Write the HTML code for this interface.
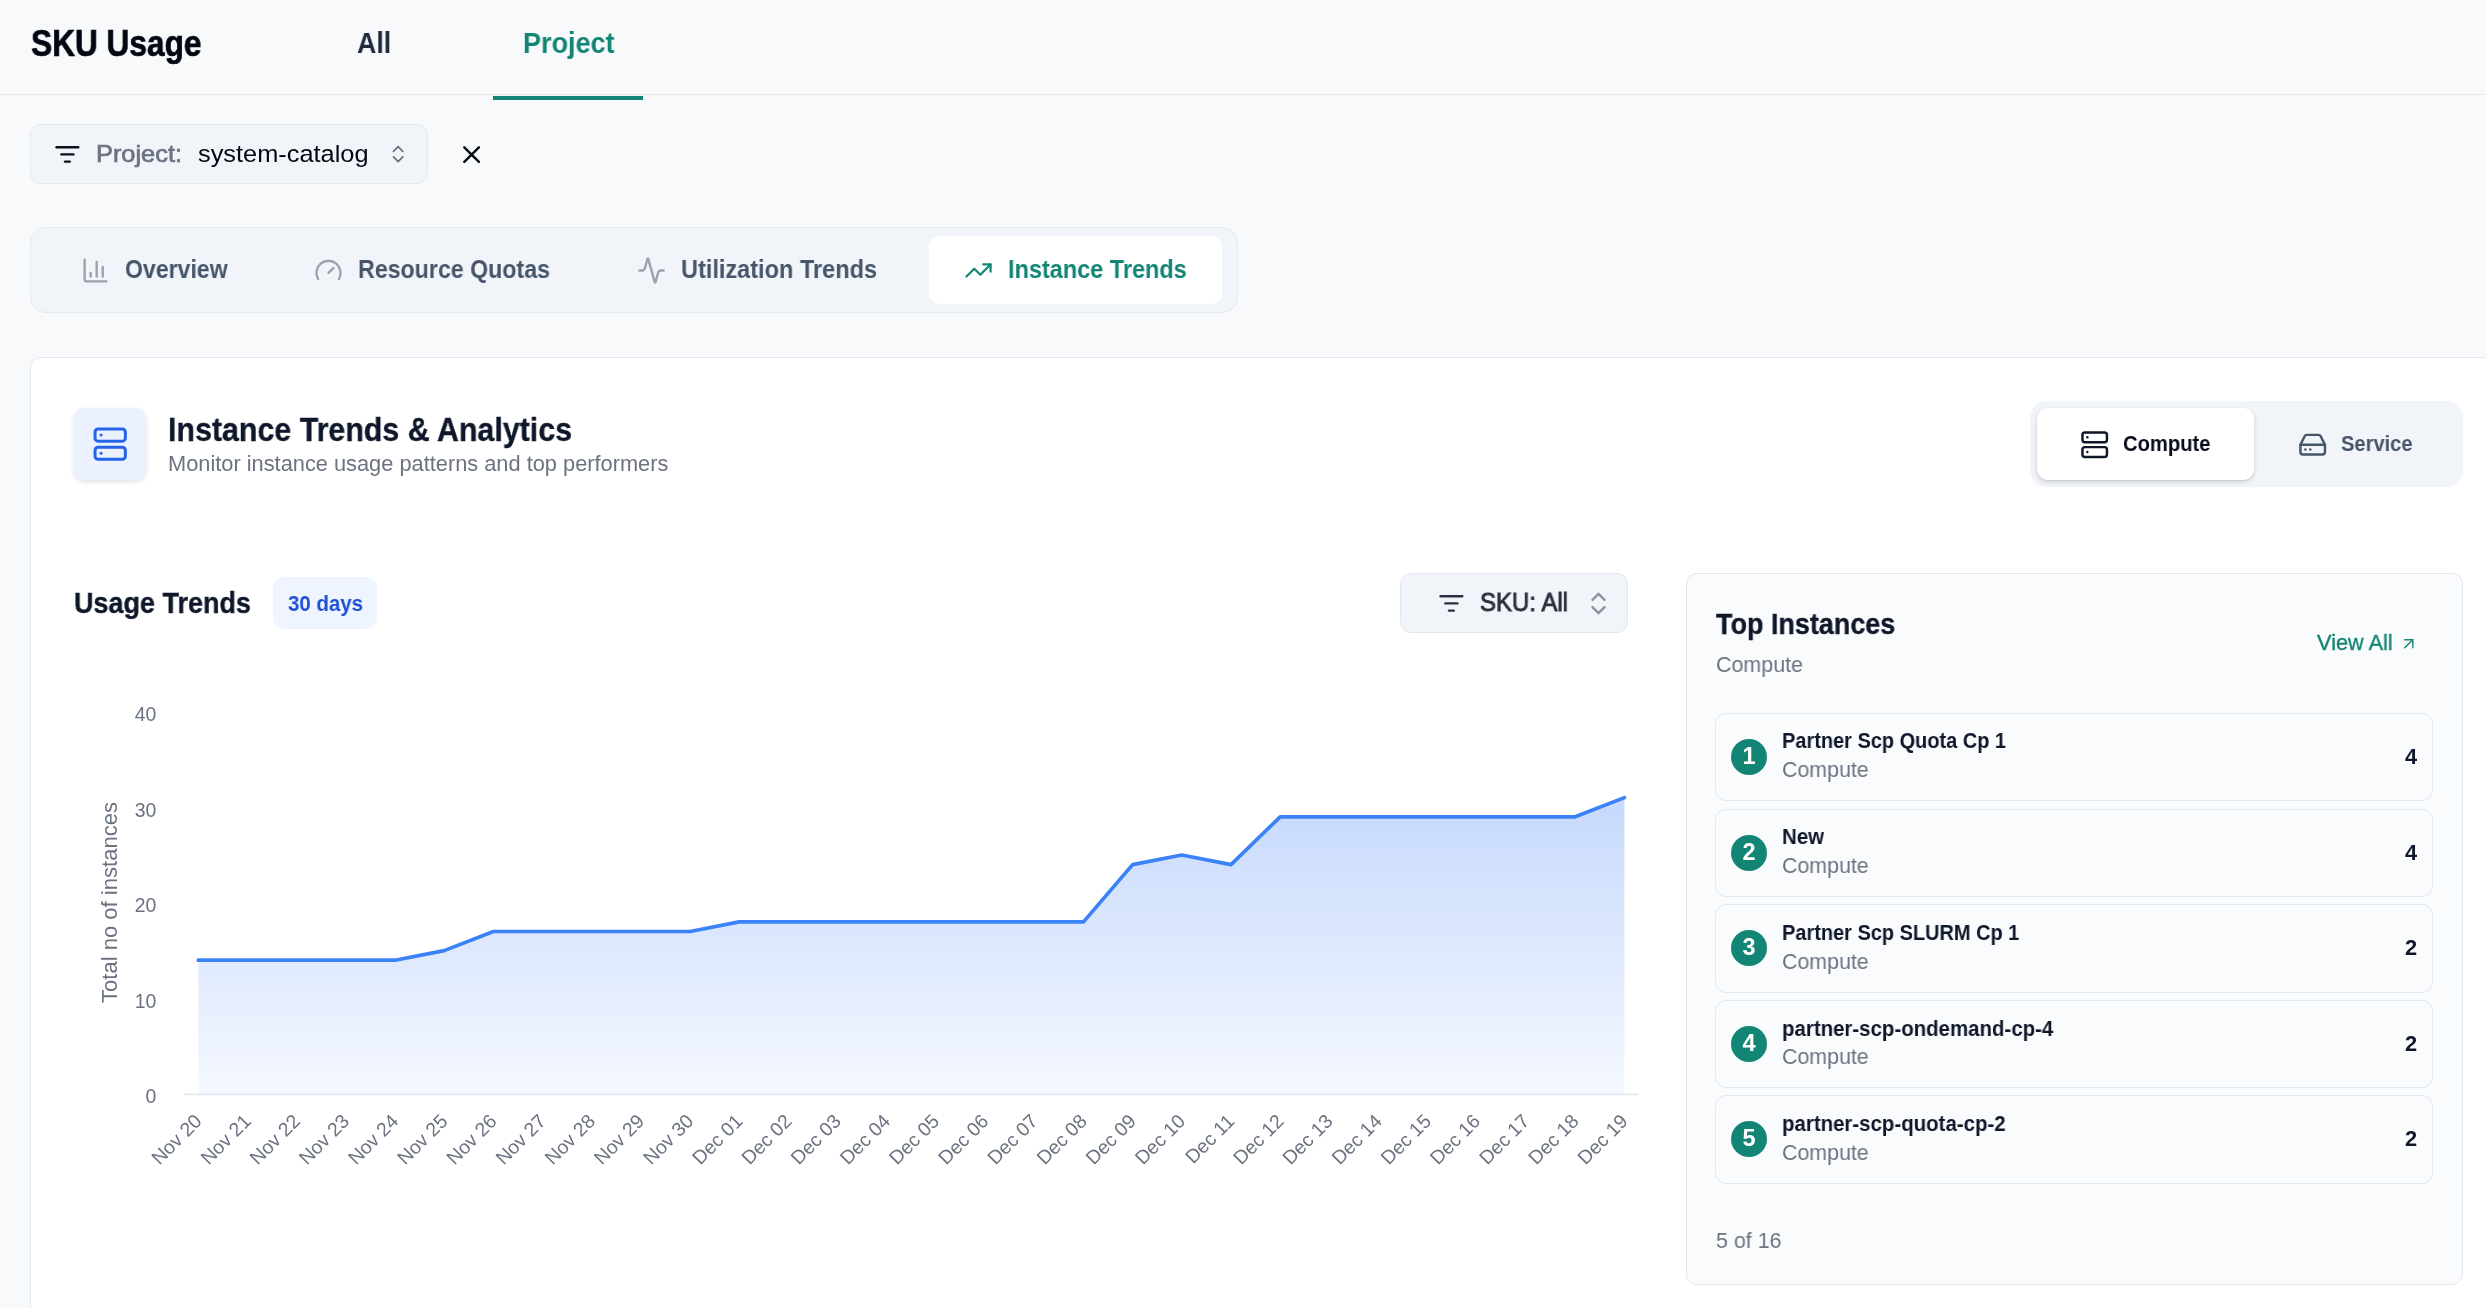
<!DOCTYPE html>
<html><head><meta charset="utf-8"><title>SKU Usage</title>
<style>
html,body{margin:0;padding:0}
body{width:2486px;height:1308px;overflow:hidden;position:relative;background:#f8f9fb;font-family:"Liberation Sans", sans-serif;}
.t{position:absolute;line-height:1;white-space:nowrap;transform-origin:0 0;will-change:transform;}
.box{position:absolute;box-sizing:border-box;}
.item{position:absolute;box-sizing:border-box;left:1715px;width:718px;height:87.7px;border:1.35px solid #e2e8f0;border-radius:11px;background:#fafbfd}
.circ{position:absolute;left:1731px;width:36px;height:36px;border-radius:50%;background:#128574;color:#fff;font-weight:bold;font-size:23.5px;line-height:35px;text-align:center;will-change:transform}
</style></head><body>
<div class="box" style="left:0;top:94px;width:2486px;height:1.3px;background:#e7e8eb"></div>
<div class="box" style="left:493px;top:96px;width:150px;height:4px;background:#128574"></div>
<div class="box" style="left:30px;top:124px;width:398px;height:60px;border:1.35px solid #e2e8f0;border-radius:10.7px;background:#f1f4f9"></div>
<div class="box" style="left:30px;top:227px;width:1208px;height:86px;border:1.35px solid #e4e9f1;border-radius:16px;background:#f1f4f9"></div>
<div class="box" style="left:929px;top:236px;width:293px;height:68px;border-radius:10.7px;background:#fff"></div>
<div class="box" style="left:30px;top:357px;width:2600px;height:1100px;border:1.35px solid #e2e8f0;border-radius:11px;background:#fff"></div>
<div class="box" style="left:74px;top:408px;width:72px;height:72px;border-radius:10.7px;background:#ebf1fe;box-shadow:0 2px 5px rgba(0,0,0,.12)"></div>
<div class="box" style="left:2030px;top:401px;width:433px;height:86px;border-radius:16px;background:#f1f4f9"></div>
<div class="box" style="left:2037px;top:408px;width:216.8px;height:72px;border-radius:11px;background:#fff;box-shadow:0 2px 5px rgba(0,0,0,.13),0 1px 2px rgba(0,0,0,.08)"></div>
<div class="box" style="left:273px;top:577px;width:104px;height:52px;border-radius:11px;background:#eff5ff"></div>
<div class="box" style="left:1400px;top:573px;width:228px;height:60px;border:1.35px solid #e2e8f0;border-radius:10.7px;background:#f1f4f9"></div>
<div class="box" style="left:1686px;top:573px;width:777px;height:712px;border:1.35px solid #e2e8f0;border-radius:11px;background:#fafbfd"></div>
<div class="item" style="top:713px;height:88px"></div><div class="circ" style="top:739px">1</div>
<div class="item" style="top:809px;height:88px"></div><div class="circ" style="top:835px">2</div>
<div class="item" style="top:904px;height:89px"></div><div class="circ" style="top:930px">3</div>
<div class="item" style="top:1000px;height:88px"></div><div class="circ" style="top:1026px">4</div>
<div class="item" style="top:1095px;height:89px"></div><div class="circ" style="top:1121px">5</div>

<svg id="chart" width="2486" height="1308" viewBox="0 0 2486 1308" style="position:absolute;left:0;top:0">
<defs><linearGradient id="ag" x1="0" y1="798" x2="0" y2="1094" gradientUnits="userSpaceOnUse"><stop offset="0" stop-color="#c6d9fc"/><stop offset="1" stop-color="#f5f8ff"/></linearGradient></defs>
<polygon points="198.3,1094 198.3,960.2 247.5,960.2 296.7,960.2 345.8,960.2 395.0,960.2 444.2,950.6 493.4,931.5 542.5,931.5 591.7,931.5 640.9,931.5 690.1,931.5 739.2,921.9 788.4,921.9 837.6,921.9 886.8,921.9 935.9,921.9 985.1,921.9 1034.3,921.9 1083.5,921.9 1132.6,864.6 1181.8,855.0 1231.0,864.6 1280.2,816.8 1329.3,816.8 1378.5,816.8 1427.7,816.8 1476.9,816.8 1526.0,816.8 1575.2,816.8 1624.4,797.6 1624.4,1094" fill="url(#ag)"/>
<rect x="184" y="1093.7" width="1454" height="1.5" fill="#e2e4e9"/>
<polyline points="198.3,960.2 247.5,960.2 296.7,960.2 345.8,960.2 395.0,960.2 444.2,950.6 493.4,931.5 542.5,931.5 591.7,931.5 640.9,931.5 690.1,931.5 739.2,921.9 788.4,921.9 837.6,921.9 886.8,921.9 935.9,921.9 985.1,921.9 1034.3,921.9 1083.5,921.9 1132.6,864.6 1181.8,855.0 1231.0,864.6 1280.2,816.8 1329.3,816.8 1378.5,816.8 1427.7,816.8 1476.9,816.8 1526.0,816.8 1575.2,816.8 1624.4,797.6" fill="none" stroke="#3b82f6" stroke-width="3.7" stroke-linejoin="round" stroke-linecap="round"/>
<g font-family='"Liberation Sans", sans-serif' font-size="19.4" fill="#6b7280" letter-spacing="0">
<text x="156.4" y="1102.9" text-anchor="end">0</text>
<text x="156.4" y="1007.5" text-anchor="end">10</text>
<text x="156.4" y="912.1" text-anchor="end">20</text>
<text x="156.4" y="816.7" text-anchor="end">30</text>
<text x="156.4" y="721.3" text-anchor="end">40</text>
<text x="202.9" y="1122.4" text-anchor="end" transform="rotate(-45 202.9 1122.4)">Nov 20</text>
<text x="252.1" y="1122.4" text-anchor="end" transform="rotate(-45 252.1 1122.4)">Nov 21</text>
<text x="301.3" y="1122.4" text-anchor="end" transform="rotate(-45 301.3 1122.4)">Nov 22</text>
<text x="350.4" y="1122.4" text-anchor="end" transform="rotate(-45 350.4 1122.4)">Nov 23</text>
<text x="399.6" y="1122.4" text-anchor="end" transform="rotate(-45 399.6 1122.4)">Nov 24</text>
<text x="448.8" y="1122.4" text-anchor="end" transform="rotate(-45 448.8 1122.4)">Nov 25</text>
<text x="498.0" y="1122.4" text-anchor="end" transform="rotate(-45 498.0 1122.4)">Nov 26</text>
<text x="547.1" y="1122.4" text-anchor="end" transform="rotate(-45 547.1 1122.4)">Nov 27</text>
<text x="596.3" y="1122.4" text-anchor="end" transform="rotate(-45 596.3 1122.4)">Nov 28</text>
<text x="645.5" y="1122.4" text-anchor="end" transform="rotate(-45 645.5 1122.4)">Nov 29</text>
<text x="694.7" y="1122.4" text-anchor="end" transform="rotate(-45 694.7 1122.4)">Nov 30</text>
<text x="743.8" y="1122.4" text-anchor="end" transform="rotate(-45 743.8 1122.4)">Dec 01</text>
<text x="793.0" y="1122.4" text-anchor="end" transform="rotate(-45 793.0 1122.4)">Dec 02</text>
<text x="842.2" y="1122.4" text-anchor="end" transform="rotate(-45 842.2 1122.4)">Dec 03</text>
<text x="891.4" y="1122.4" text-anchor="end" transform="rotate(-45 891.4 1122.4)">Dec 04</text>
<text x="940.5" y="1122.4" text-anchor="end" transform="rotate(-45 940.5 1122.4)">Dec 05</text>
<text x="989.7" y="1122.4" text-anchor="end" transform="rotate(-45 989.7 1122.4)">Dec 06</text>
<text x="1038.9" y="1122.4" text-anchor="end" transform="rotate(-45 1038.9 1122.4)">Dec 07</text>
<text x="1088.1" y="1122.4" text-anchor="end" transform="rotate(-45 1088.1 1122.4)">Dec 08</text>
<text x="1137.2" y="1122.4" text-anchor="end" transform="rotate(-45 1137.2 1122.4)">Dec 09</text>
<text x="1186.4" y="1122.4" text-anchor="end" transform="rotate(-45 1186.4 1122.4)">Dec 10</text>
<text x="1235.6" y="1122.4" text-anchor="end" transform="rotate(-45 1235.6 1122.4)">Dec 11</text>
<text x="1284.8" y="1122.4" text-anchor="end" transform="rotate(-45 1284.8 1122.4)">Dec 12</text>
<text x="1333.9" y="1122.4" text-anchor="end" transform="rotate(-45 1333.9 1122.4)">Dec 13</text>
<text x="1383.1" y="1122.4" text-anchor="end" transform="rotate(-45 1383.1 1122.4)">Dec 14</text>
<text x="1432.3" y="1122.4" text-anchor="end" transform="rotate(-45 1432.3 1122.4)">Dec 15</text>
<text x="1481.5" y="1122.4" text-anchor="end" transform="rotate(-45 1481.5 1122.4)">Dec 16</text>
<text x="1530.6" y="1122.4" text-anchor="end" transform="rotate(-45 1530.6 1122.4)">Dec 17</text>
<text x="1579.8" y="1122.4" text-anchor="end" transform="rotate(-45 1579.8 1122.4)">Dec 18</text>
<text x="1629.0" y="1122.4" text-anchor="end" transform="rotate(-45 1629.0 1122.4)">Dec 19</text>
</g>
<text x="117" y="902.5" text-anchor="middle" transform="rotate(-90 117 902.5)" font-family='"Liberation Sans", sans-serif' font-size="21.6" textLength="201" lengthAdjust="spacingAndGlyphs" fill="#6b7280">Total no of instances</text>
</svg>
<svg style="position:absolute;left:53px;top:139.6px" width="28.8" height="28.8" viewBox="0 0 24 24" fill="none" stroke="#0b0f1a" stroke-width="2" stroke-linecap="round" stroke-linejoin="round" ><path d="M3 6h18"/><path d="M7 12h10"/><path d="M10 18h4"/></svg>
<svg style="position:absolute;left:387.0px;top:143.0px" width="22.3" height="22.3" viewBox="0 0 24 24" fill="none" stroke="#6b7280" stroke-width="1.9" stroke-linecap="round" stroke-linejoin="round" ><path d="m7 15 5 5 5-5"/><path d="m7 9 5-5 5 5"/></svg>
<svg style="position:absolute;left:456.5px;top:139.7px" width="29.2" height="29.2" viewBox="0 0 24 24" fill="none" stroke="#070b16" stroke-width="2" stroke-linecap="round" stroke-linejoin="round" ><path d="M18 6 6 18"/><path d="m6 6 12 12"/></svg>
<svg style="position:absolute;left:80.6px;top:256.1px" width="29" height="29" viewBox="0 0 24 24" fill="none" stroke="#9ca3af" stroke-width="2" stroke-linecap="round" stroke-linejoin="round" ><path d="M3 3v16a2 2 0 0 0 2 2h16"/><path d="M18 17V9"/><path d="M13 17V5"/><path d="M8 17v-3"/></svg>
<svg style="position:absolute;left:313.5px;top:255.6px" width="29" height="29" viewBox="0 0 24 24" fill="none" stroke="#9ca3af" stroke-width="2" stroke-linecap="round" stroke-linejoin="round" ><path d="m12 14 4-4"/><path d="M3.34 19a10 10 0 1 1 17.32 0"/></svg>
<svg style="position:absolute;left:636.5px;top:255.8px" width="29" height="29" viewBox="0 0 24 24" fill="none" stroke="#9ca3af" stroke-width="2" stroke-linecap="round" stroke-linejoin="round" ><path d="M22 12h-2.48a2 2 0 0 0-1.93 1.46l-2.35 8.36a.25.25 0 0 1-.48 0L9.24 2.18a.25.25 0 0 0-.48 0l-2.35 8.36A2 2 0 0 1 4.49 12H2"/></svg>
<svg style="position:absolute;left:964px;top:255.8px" width="29" height="29" viewBox="0 0 24 24" fill="none" stroke="#128574" stroke-width="1.8" stroke-linecap="round" stroke-linejoin="round" ><path d="M16 7h6v6"/><path d="m22 7-8.5 8.5-5-5L2 17"/></svg>
<svg style="position:absolute;left:92px;top:425.8px" width="36.4" height="36.4" viewBox="0 0 24 24" fill="none" stroke="#2563eb" stroke-width="2" stroke-linecap="round" stroke-linejoin="round" ><rect width="20" height="8" x="2" y="2" rx="2" ry="2"/><rect width="20" height="8" x="2" y="14" rx="2" ry="2"/><line x1="6" x2="6.01" y1="6" y2="6"/><line x1="6" x2="6.01" y1="18" y2="18"/></svg>
<svg style="position:absolute;left:2079.6px;top:429.9px" width="29.4" height="29.4" viewBox="0 0 24 24" fill="none" stroke="#0f172a" stroke-width="2" stroke-linecap="round" stroke-linejoin="round" ><rect width="20" height="8" x="2" y="2" rx="2" ry="2"/><rect width="20" height="8" x="2" y="14" rx="2" ry="2"/><line x1="6" x2="6.01" y1="6" y2="6"/><line x1="6" x2="6.01" y1="18" y2="18"/></svg>
<svg style="position:absolute;left:2298px;top:429.6px" width="29.4" height="29.4" viewBox="0 0 24 24" fill="none" stroke="#475569" stroke-width="2" stroke-linecap="round" stroke-linejoin="round" ><line x1="22" x2="2" y1="12" y2="12"/><path d="M5.45 5.11 2 12v6a2 2 0 0 0 2 2h16a2 2 0 0 0 2-2v-6l-3.45-6.89A2 2 0 0 0 16.76 4H7.24a2 2 0 0 0-1.79 1.11z"/><line x1="6" x2="6.01" y1="16" y2="16"/><line x1="10" x2="10.01" y1="16" y2="16"/></svg>
<svg style="position:absolute;left:1437px;top:589px" width="28.8" height="28.8" viewBox="0 0 24 24" fill="none" stroke="#2b313e" stroke-width="2" stroke-linecap="round" stroke-linejoin="round" ><path d="M3 6h18"/><path d="M7 12h10"/><path d="M10 18h4"/></svg>
<svg style="position:absolute;left:1584.2px;top:589px" width="29" height="29" viewBox="0 0 24 24" fill="none" stroke="#8d94a1" stroke-width="2" stroke-linecap="round" stroke-linejoin="round" ><path d="m7 15 5 5 5-5"/><path d="m7 9 5-5 5 5"/></svg>
<svg style="position:absolute;left:2399.4px;top:633.9px" width="19.5" height="19.5" viewBox="0 0 24 24" fill="none" stroke="#128574" stroke-width="1.7" stroke-linecap="round" stroke-linejoin="round" ><path d="M7 7h10v10"/><path d="M7 17 17 7"/></svg>
<div class="t" id="t_sku" style="font-size:37.3px;font-weight:bold;color:#030712;top:25px;left:30.60px;transform:scaleX(0.8480);-webkit-text-stroke:0.7px #030712;">SKU Usage</div>
<div class="t" id="t_all" style="font-size:29.3px;font-weight:bold;color:#1e293b;top:28px;left:357.10px;transform:scaleX(0.9135);">All</div>
<div class="t" id="t_proj" style="font-size:29.3px;font-weight:bold;color:#128574;top:28px;left:522.60px;transform:scaleX(0.9222);">Project</div>
<div class="t" id="t_projl" style="font-size:24.5px;font-weight:normal;color:#6b7280;top:142px;left:96.00px;transform:scaleX(1.0354);-webkit-text-stroke:0.7px #6b7280;">Project:</div>
<div class="t" id="t_syscat" style="font-size:24.5px;font-weight:normal;color:#030712;top:142px;left:198.00px;transform:scaleX(1.0348);">system-catalog</div>
<div class="t" id="t_ov" style="font-size:25.8px;font-weight:bold;color:#475569;top:257px;left:125.30px;transform:scaleX(0.8942);">Overview</div>
<div class="t" id="t_rq" style="font-size:25.8px;font-weight:bold;color:#475569;top:257px;left:358.30px;transform:scaleX(0.8988);">Resource Quotas</div>
<div class="t" id="t_ut" style="font-size:25.8px;font-weight:bold;color:#475569;top:257px;left:680.50px;transform:scaleX(0.9116);">Utilization Trends</div>
<div class="t" id="t_it" style="font-size:25.8px;font-weight:bold;color:#128574;top:257px;left:1007.50px;transform:scaleX(0.9103);">Instance Trends</div>
<div class="t" id="t_title" style="font-size:32.5px;font-weight:bold;color:#0f172a;top:414px;left:167.60px;transform:scaleX(0.9346);-webkit-text-stroke:0.35px #0f172a;">Instance Trends &amp; Analytics</div>
<div class="t" id="t_sub" style="font-size:21.8px;font-weight:normal;color:#6b7280;top:453px;left:167.60px;">Monitor instance usage patterns and top performers</div>
<div class="t" id="t_ut2" style="font-size:29.6px;font-weight:bold;color:#0f172a;top:588px;left:74.10px;transform:scaleX(0.9119);-webkit-text-stroke:0.35px #0f172a;">Usage Trends</div>
<div class="t" id="t_30" style="font-size:21.6px;font-weight:bold;color:#1d4ed8;top:593px;left:287.80px;transform:scaleX(0.9464);">30 days</div>
<div class="t" id="t_cmp" style="font-size:21.8px;font-weight:bold;color:#050a18;top:433px;left:2122.80px;transform:scaleX(0.9264);">Compute</div>
<div class="t" id="t_svc" style="font-size:21.8px;font-weight:bold;color:#475569;top:433px;left:2341.00px;transform:scaleX(0.9217);">Service</div>
<div class="t" id="t_skuall" style="font-size:25.2px;font-weight:normal;color:#2b313e;top:590px;left:1480.00px;transform:scaleX(0.9525);-webkit-text-stroke:0.9px #2b313e;">SKU: All</div>
<div class="t" id="t_top" style="font-size:29.6px;font-weight:bold;color:#0f172a;top:609px;left:1716.00px;transform:scaleX(0.9112);-webkit-text-stroke:0.35px #0f172a;">Top Instances</div>
<div class="t" id="t_topc" style="font-size:21.8px;font-weight:normal;color:#6b7280;top:654px;left:1716.00px;transform:scaleX(0.9836);">Compute</div>
<div class="t" id="t_va" style="font-size:21.8px;font-weight:normal;color:#128574;top:632px;left:2317.00px;transform:scaleX(0.9969);-webkit-text-stroke:0.35px #128574;">View All</div>
<div class="t" id="t_516" style="font-size:21.8px;font-weight:normal;color:#6b7280;top:1230px;left:1716.30px;transform:scaleX(0.9824);">5 of 16</div>
<div class="t" id="t_n0" style="font-size:21.8px;font-weight:bold;color:#0f172a;top:730px;left:1781.70px;transform:scaleX(0.9155);">Partner Scp Quota Cp 1</div>
<div class="t" id="t_c0" style="font-size:21.8px;font-weight:normal;color:#6b7280;top:759px;left:1781.70px;transform:scaleX(0.9802);">Compute</div>
<div class="t" id="t_v0" style="font-size:21.8px;font-weight:bold;color:#0f172a;top:746px;right:68.8px;">4</div>
<div class="t" id="t_n1" style="font-size:21.8px;font-weight:bold;color:#0f172a;top:826px;left:1781.70px;transform:scaleX(0.9414);">New</div>
<div class="t" id="t_c1" style="font-size:21.8px;font-weight:normal;color:#6b7280;top:855px;left:1781.70px;transform:scaleX(0.9802);">Compute</div>
<div class="t" id="t_v1" style="font-size:21.8px;font-weight:bold;color:#0f172a;top:842px;right:68.8px;">4</div>
<div class="t" id="t_n2" style="font-size:21.8px;font-weight:bold;color:#0f172a;top:922px;left:1781.70px;transform:scaleX(0.9155);">Partner Scp SLURM Cp 1</div>
<div class="t" id="t_c2" style="font-size:21.8px;font-weight:normal;color:#6b7280;top:951px;left:1781.70px;transform:scaleX(0.9802);">Compute</div>
<div class="t" id="t_v2" style="font-size:21.8px;font-weight:bold;color:#0f172a;top:937px;right:68.8px;">2</div>
<div class="t" id="t_n3" style="font-size:21.8px;font-weight:bold;color:#0f172a;top:1018px;left:1781.70px;transform:scaleX(0.9373);">partner-scp-ondemand-cp-4</div>
<div class="t" id="t_c3" style="font-size:21.8px;font-weight:normal;color:#6b7280;top:1046px;left:1781.70px;transform:scaleX(0.9802);">Compute</div>
<div class="t" id="t_v3" style="font-size:21.8px;font-weight:bold;color:#0f172a;top:1033px;right:68.8px;">2</div>
<div class="t" id="t_n4" style="font-size:21.8px;font-weight:bold;color:#0f172a;top:1113px;left:1781.70px;transform:scaleX(0.9372);">partner-scp-quota-cp-2</div>
<div class="t" id="t_c4" style="font-size:21.8px;font-weight:normal;color:#6b7280;top:1142px;left:1781.70px;transform:scaleX(0.9802);">Compute</div>
<div class="t" id="t_v4" style="font-size:21.8px;font-weight:bold;color:#0f172a;top:1128px;right:68.8px;">2</div>
</body></html>
